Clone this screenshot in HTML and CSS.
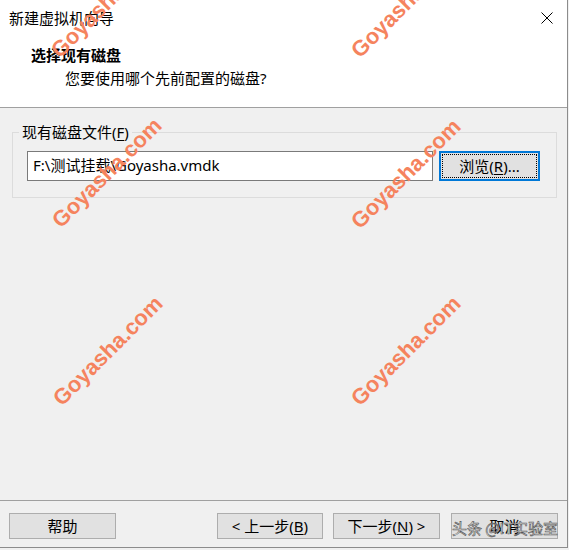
FILE: index.html
```html
<!DOCTYPE html>
<html lang="zh-CN">
<head>
<meta charset="utf-8">
<title>新建虚拟机向导</title>
<link rel="stylesheet" href="styles.css">
</head>
<body>
<div class="window">
  <header class="header">
    <div class="titlebar">
      <span class="title">新建虚拟机向导</span>
      <svg class="close" width="12" height="12" viewBox="0 0 12 12"><path d="M0.5 0.5 L11.5 11.5 M11.5 0.5 L0.5 11.5" stroke="#000" stroke-width="1" fill="none"/></svg>
    </div>
    <div class="heading">选择现有磁盘</div>
    <div class="sub">您要使用哪个先前配置的磁盘?</div>
  </header>
  <main class="content">
    <fieldset class="group">
      <legend class="legend">现有磁盘文件(<u>F</u>)</legend>
      <div class="group-body">
        <div class="input">F:\测试挂载\Goyasha.vmdk</div>
        <div class="btn btn-focus"><span class="focus-ring">浏览(<u>R</u>)...</span></div>
      </div>
    </fieldset>
  </main>
  <footer class="footer">
    <div class="btn">帮助</div>
    <div class="btn btn-prev">&lt; 上一步(<u>B</u>)</div>
    <div class="btn">下一步(<u>N</u>) &gt;</div>
    <div class="btn btn-cancel">取消</div>
  </footer>
</div>
<div class="wm" style="left:106px;top:3px">Goyasha.com</div>
<div class="wm" style="left:406px;top:3px">Goyasha.com</div>
<div class="wm" style="left:107px;top:173px">Goyasha.com</div>
<div class="wm" style="left:406px;top:174px">Goyasha.com</div>
<div class="wm" style="left:108px;top:351px">Goyasha.com</div>
<div class="wm" style="left:406px;top:351px">Goyasha.com</div>
<div class="wm2">头条 @IT实验室</div>
</body>
</html>
```
FILE: styles.css
```css
html, body {
  margin: 0;
  padding: 0;
}
body {
  width: 569px;
  height: 550px;
  background: #f0f0f0;
  font-family: "Noto Sans", "Noto Sans CJK SC", sans-serif;
  font-size: 15px;
  color: #000;
  position: relative;
  overflow: hidden;
}
.window {
  width: 568px;
  height: 548px;
  box-sizing: border-box;
  border-right: 1px solid #8c8c8c;
  border-bottom: 1px solid #8c8c8c;
  display: flex;
  flex-direction: column;
  background: #f0f0f0;
}
.header {
  background: #fff;
  height: 108px;
  box-sizing: border-box;
  border-bottom: 1px solid #a0a0a0;
}
.titlebar {
  height: 36px;
  display: flex;
  align-items: center;
  justify-content: space-between;
  padding: 0 14px 0 9px;
}
.title {
  line-height: 20px;
}
.close {
  display: block;
}
.heading {
  margin-top: 9px;
  padding-left: 31px;
  font-weight: bold;
  line-height: 20px;
}
.sub {
  margin-top: 3px;
  padding-left: 65px;
  line-height: 20px;
}
.content {
  flex: 1;
  padding-top: 14px;
}
.group {
  margin: 0 0 0 12px;
  padding: 0;
  width: 545px;
  box-sizing: border-box;
  border: 1px solid #dcdcdc;
}
.legend {
  margin-left: 6px;
  padding: 0 3px;
  line-height: 20px;
}
.group-body {
  display: flex;
  gap: 6px;
  padding: 9px 0 16px 14px;
}
.input {
  width: 406px;
  height: 30px;
  box-sizing: border-box;
  border: 1px solid #7a7a7a;
  background: #fff;
  padding-left: 5px;
  line-height: 27px;
}
.btn {
  width: 107px;
  height: 26px;
  box-sizing: border-box;
  border: 1px solid #adadad;
  background: #e1e1e1;
  display: flex;
  align-items: center;
  justify-content: center;
  line-height: 20px;
}
.btn-focus {
  width: 101px;
  height: 30px;
  border: 2px solid #0078d7;
  padding: 1px;
}
.focus-ring {
  width: 100%;
  height: 100%;
  box-sizing: border-box;
  border: 1px dotted #000;
  display: flex;
  align-items: center;
  justify-content: center;
}
.footer {
  height: 47px;
  box-sizing: border-box;
  border-top: 1px solid #a0a0a0;
  display: flex;
  gap: 10px;
  padding: 12px 9px 0 9px;
}
.btn-prev {
  margin-left: auto;
  width: 106px;
}
.btn-cancel {
  margin-left: 1px;
}
u {
  text-decoration-thickness: 1px;
  text-underline-offset: 2px;
}
.wm {
  position: absolute;
  transform: translate(-50%, -50%) rotate(-45deg);
  font-family: "Liberation Sans", Arial, sans-serif;
  font-weight: bold;
  font-size: 22px;
  line-height: 24px;
  color: #f5835e;
  white-space: nowrap;
}
.wm2 {
  position: absolute;
  left: 452px;
  top: 518px;
  font-family: "Noto Sans CJK SC", sans-serif;
  font-size: 15px;
  line-height: 20px;
  color: #f4f4f4;
  -webkit-text-stroke: 0.6px #555;
  white-space: nowrap;
}
```
